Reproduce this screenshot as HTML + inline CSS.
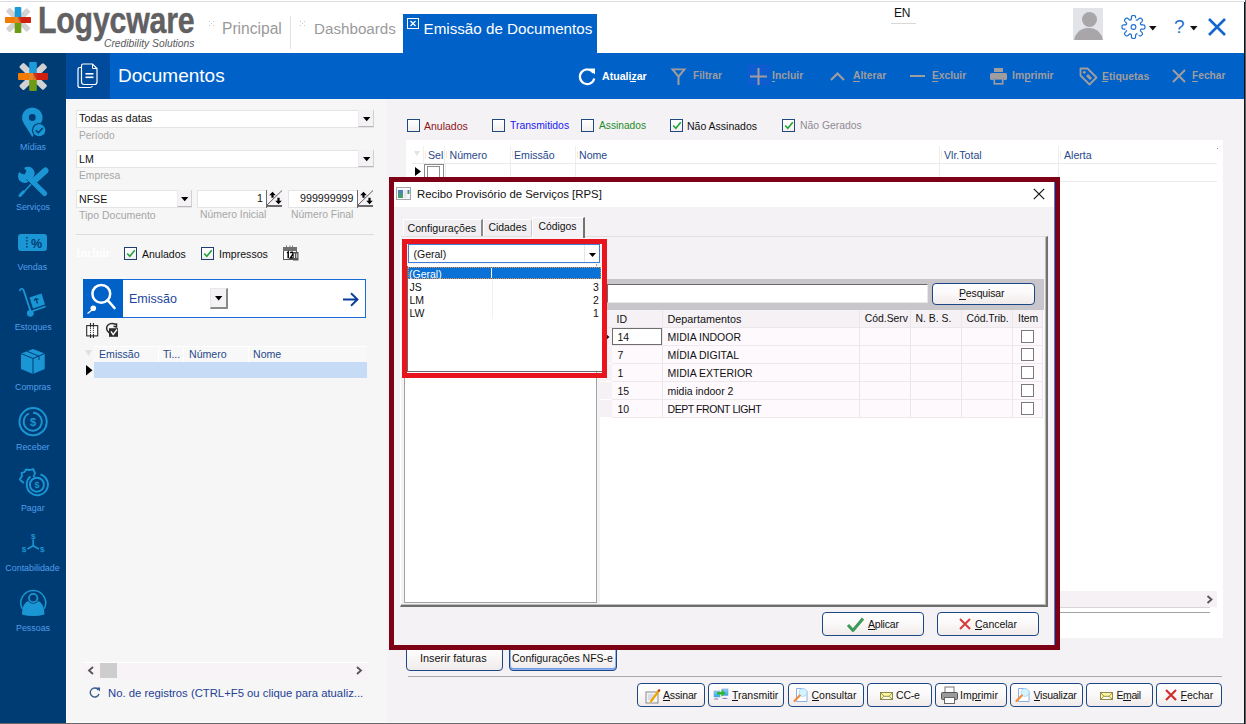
<!DOCTYPE html>
<html><head><meta charset="utf-8">
<style>
*{box-sizing:border-box;margin:0;padding:0}
html,body{width:1246px;height:724px;overflow:hidden;background:#fff;font-family:"Liberation Sans",sans-serif;}
.a{position:absolute}
.t{position:absolute;white-space:nowrap;line-height:1}
svg{position:absolute;overflow:visible}
</style></head><body>
<div id="root" class="a" style="left:0;top:0;width:1246px;height:724px;">

<!-- ===== HEADER ===== -->
<div class="a" style="left:0;top:1px;width:1244px;height:1px;background:#dcdce3"></div>
<div class="a" style="left:1245px;top:0;width:1px;height:724px;background:#5c6068"></div>
<div class="a" style="left:1244px;top:2px;width:1px;height:722px;background:#111"></div>

<!-- logo -->
<svg style="left:5px;top:7px" width="26" height="26" viewBox="0 0 30 30">
  <g id="logo">
  <rect x="12" y="-2" width="6.5" height="34" rx="1.5" fill="#d2d2d4" transform="rotate(45 15 15)"/>
  <rect x="12" y="-2" width="6.5" height="34" rx="1.5" fill="#d2d2d4" transform="rotate(-45 15 15)"/>
  <rect x="11.2" y="0" width="7.6" height="15" rx="1" fill="#1d9ad8"/>
  <rect x="11.2" y="15" width="7.6" height="15" rx="1" fill="#6c9c14"/>
  <rect x="0" y="11.5" width="15" height="7" rx="1" fill="#f27b06"/>
  <rect x="15" y="11.5" width="15" height="7" rx="1" fill="#d2200f"/>
  <path d="M11.2 11.5 L15 11.5 L18.8 18.5 L11.2 18.5Z" fill="#e48a2a" opacity="0.8"/>
  <path d="M15 11.5 L18.8 11.5 L18.8 18.5Z" fill="#c53b2a" opacity="0.9"/>
  </g>
</svg>
<div class="t" style="left:38px;top:2.5px;font-size:30px;font-weight:700;color:#616063;transform-origin:0 0;transform:scale(1.01,1.2);letter-spacing:-0.2px;-webkit-text-stroke:0.35px #616063">Logycware</div>
<div class="t" style="left:104px;top:38.5px;font-size:10.3px;font-style:italic;color:#59585c">Credibility Solutions</div>

<!-- tabs -->
<svg style="left:209px;top:21px" width="6" height="5"><g fill="#c8c8c8"><rect x="0" y="0" width="1" height="1"/><rect x="4" y="0" width="1" height="1"/><rect x="2" y="2" width="1" height="1"/><rect x="0" y="4" width="1" height="1"/><rect x="4" y="4" width="1" height="1"/></g></svg>
<div class="t" style="left:222px;top:21px;font-size:15.6px;color:#9a9a9a">Principal</div>
<div class="a" style="left:290px;top:16px;width:1px;height:33px;background:#e2e2e2"></div>
<svg style="left:300px;top:21px" width="6" height="5"><g fill="#c8c8c8"><rect x="0" y="0" width="1" height="1"/><rect x="4" y="0" width="1" height="1"/><rect x="2" y="2" width="1" height="1"/><rect x="0" y="4" width="1" height="1"/><rect x="4" y="4" width="1" height="1"/></g></svg>
<div class="t" style="left:314px;top:21px;font-size:15.2px;color:#9a9a9a">Dashboards</div>

<div class="a" style="left:403px;top:14px;width:194px;height:40px;background:#0061c9"></div>
<svg style="left:407px;top:18px" width="12" height="11"><rect x="0.5" y="0.5" width="11" height="10" fill="none" stroke="#fff" stroke-width="1"/><path d="M3.5 3 L8.5 8 M8.5 3 L3.5 8" stroke="#fff" stroke-width="1.3"/></svg>
<div class="t" style="left:423.5px;top:21px;font-size:15.2px;color:#fff">Emissão de Documentos</div>

<div class="t" style="left:894px;top:7px;font-size:12px;color:#111;letter-spacing:-0.3px">EN</div>
<div class="a" style="left:891px;top:23px;width:25px;height:1px;background:#d8d8d8"></div>

<div class="a" style="left:1073px;top:8px;width:30px;height:32px;background:#e3e3ea;overflow:hidden">
  <div class="a" style="left:9px;top:4px;width:15px;height:15px;border-radius:50%;background:#a8a6a9"></div>
  <div class="a" style="left:1px;top:20px;width:29px;height:24px;border-radius:14px 14px 0 0;background:#a8a6a9"></div>
</div>
<svg style="left:1121px;top:15px" width="25" height="24" viewBox="0 0 25 24"><path fill="none" stroke="#1e6ecf" stroke-width="1.2" stroke-dasharray="16 1.5 26 1.5 34 1.5 200" d="M24.00 12.00 L24.00 12.15 L23.99 12.30 L23.99 12.45 L23.97 12.60 L23.96 12.75 L23.94 12.90 L23.91 13.05 L23.87 13.20 L23.82 13.34 L23.75 13.48 L23.64 13.62 L23.49 13.74 L23.29 13.85 L23.00 13.95 L22.64 14.02 L22.20 14.06 L21.73 14.09 L21.28 14.11 L20.88 14.13 L20.55 14.16 L20.30 14.20 L20.11 14.25 L19.97 14.32 L19.86 14.39 L19.78 14.47 L19.71 14.55 L19.66 14.64 L19.61 14.73 L19.56 14.82 L19.52 14.91 L19.49 15.00 L19.45 15.10 L19.43 15.19 L19.41 15.29 L19.40 15.40 L19.40 15.52 L19.42 15.64 L19.48 15.79 L19.57 15.96 L19.72 16.17 L19.93 16.42 L20.20 16.72 L20.51 17.05 L20.82 17.40 L21.09 17.74 L21.30 18.05 L21.44 18.32 L21.51 18.54 L21.52 18.74 L21.50 18.91 L21.45 19.06 L21.39 19.20 L21.31 19.33 L21.22 19.45 L21.13 19.57 L21.04 19.69 L20.94 19.80 L20.84 19.91 L20.74 20.02 L20.63 20.13 L20.52 20.24 L20.41 20.34 L20.30 20.44 L20.19 20.54 L20.07 20.63 L19.95 20.72 L19.83 20.81 L19.70 20.89 L19.56 20.95 L19.41 21.00 L19.24 21.02 L19.04 21.01 L18.82 20.94 L18.55 20.80 L18.24 20.59 L17.90 20.32 L17.55 20.01 L17.22 19.70 L16.92 19.43 L16.67 19.22 L16.46 19.07 L16.29 18.98 L16.14 18.92 L16.02 18.90 L15.90 18.90 L15.79 18.91 L15.69 18.93 L15.60 18.95 L15.50 18.99 L15.41 19.02 L15.32 19.06 L15.23 19.11 L15.14 19.16 L15.05 19.21 L14.97 19.28 L14.89 19.36 L14.82 19.47 L14.75 19.61 L14.70 19.80 L14.66 20.05 L14.63 20.38 L14.61 20.78 L14.59 21.23 L14.56 21.70 L14.52 22.14 L14.45 22.50 L14.35 22.79 L14.24 22.99 L14.12 23.14 L13.98 23.25 L13.84 23.32 L13.70 23.37 L13.55 23.41 L13.40 23.44 L13.25 23.46 L13.10 23.47 L12.95 23.49 L12.80 23.49 L12.65 23.50 L12.50 23.50 L12.35 23.50 L12.20 23.49 L12.05 23.49 L11.90 23.47 L11.75 23.46 L11.60 23.44 L11.45 23.41 L11.30 23.37 L11.16 23.32 L11.02 23.25 L10.88 23.14 L10.76 22.99 L10.65 22.79 L10.55 22.50 L10.48 22.14 L10.44 21.70 L10.41 21.23 L10.39 20.78 L10.37 20.38 L10.34 20.05 L10.30 19.80 L10.25 19.61 L10.18 19.47 L10.11 19.36 L10.03 19.28 L9.95 19.21 L9.86 19.16 L9.77 19.11 L9.68 19.06 L9.59 19.02 L9.50 18.99 L9.40 18.95 L9.31 18.93 L9.21 18.91 L9.10 18.90 L8.98 18.90 L8.86 18.92 L8.71 18.98 L8.54 19.07 L8.33 19.22 L8.08 19.43 L7.78 19.70 L7.45 20.01 L7.10 20.32 L6.76 20.59 L6.45 20.80 L6.18 20.94 L5.96 21.01 L5.76 21.02 L5.59 21.00 L5.44 20.95 L5.30 20.89 L5.17 20.81 L5.05 20.72 L4.93 20.63 L4.81 20.54 L4.70 20.44 L4.59 20.34 L4.48 20.24 L4.37 20.13 L4.26 20.02 L4.16 19.91 L4.06 19.80 L3.96 19.69 L3.87 19.57 L3.78 19.45 L3.69 19.33 L3.61 19.20 L3.55 19.06 L3.50 18.91 L3.48 18.74 L3.49 18.54 L3.56 18.32 L3.70 18.05 L3.91 17.74 L4.18 17.40 L4.49 17.05 L4.80 16.72 L5.07 16.42 L5.28 16.17 L5.43 15.96 L5.52 15.79 L5.58 15.64 L5.60 15.52 L5.60 15.40 L5.59 15.29 L5.57 15.19 L5.55 15.10 L5.51 15.00 L5.48 14.91 L5.44 14.82 L5.39 14.73 L5.34 14.64 L5.29 14.55 L5.22 14.47 L5.14 14.39 L5.03 14.32 L4.89 14.25 L4.70 14.20 L4.45 14.16 L4.12 14.13 L3.72 14.11 L3.27 14.09 L2.80 14.06 L2.36 14.02 L2.00 13.95 L1.71 13.85 L1.51 13.74 L1.36 13.62 L1.25 13.48 L1.18 13.34 L1.13 13.20 L1.09 13.05 L1.06 12.90 L1.04 12.75 L1.03 12.60 L1.01 12.45 L1.01 12.30 L1.00 12.15 L1.00 12.00 L1.00 11.85 L1.01 11.70 L1.01 11.55 L1.03 11.40 L1.04 11.25 L1.06 11.10 L1.09 10.95 L1.13 10.80 L1.18 10.66 L1.25 10.52 L1.36 10.38 L1.51 10.26 L1.71 10.15 L2.00 10.05 L2.36 9.98 L2.80 9.94 L3.27 9.91 L3.72 9.89 L4.12 9.87 L4.45 9.84 L4.70 9.80 L4.89 9.75 L5.03 9.68 L5.14 9.61 L5.22 9.53 L5.29 9.45 L5.34 9.36 L5.39 9.27 L5.44 9.18 L5.48 9.09 L5.51 9.00 L5.55 8.90 L5.57 8.81 L5.59 8.71 L5.60 8.60 L5.60 8.48 L5.58 8.36 L5.52 8.21 L5.43 8.04 L5.28 7.83 L5.07 7.58 L4.80 7.28 L4.49 6.95 L4.18 6.60 L3.91 6.26 L3.70 5.95 L3.56 5.68 L3.49 5.46 L3.48 5.26 L3.50 5.09 L3.55 4.94 L3.61 4.80 L3.69 4.67 L3.78 4.55 L3.87 4.43 L3.96 4.31 L4.06 4.20 L4.16 4.09 L4.26 3.98 L4.37 3.87 L4.48 3.76 L4.59 3.66 L4.70 3.56 L4.81 3.46 L4.93 3.37 L5.05 3.28 L5.17 3.19 L5.30 3.11 L5.44 3.05 L5.59 3.00 L5.76 2.98 L5.96 2.99 L6.18 3.06 L6.45 3.20 L6.76 3.41 L7.10 3.68 L7.45 3.99 L7.78 4.30 L8.08 4.57 L8.33 4.78 L8.54 4.93 L8.71 5.02 L8.86 5.08 L8.98 5.10 L9.10 5.10 L9.21 5.09 L9.31 5.07 L9.40 5.05 L9.50 5.01 L9.59 4.98 L9.68 4.94 L9.77 4.89 L9.86 4.84 L9.95 4.79 L10.03 4.72 L10.11 4.64 L10.18 4.53 L10.25 4.39 L10.30 4.20 L10.34 3.95 L10.37 3.62 L10.39 3.22 L10.41 2.77 L10.44 2.30 L10.48 1.86 L10.55 1.50 L10.65 1.21 L10.76 1.01 L10.88 0.86 L11.02 0.75 L11.16 0.68 L11.30 0.63 L11.45 0.59 L11.60 0.56 L11.75 0.54 L11.90 0.53 L12.05 0.51 L12.20 0.51 L12.35 0.50 L12.50 0.50 L12.65 0.50 L12.80 0.51 L12.95 0.51 L13.10 0.53 L13.25 0.54 L13.40 0.56 L13.55 0.59 L13.70 0.63 L13.84 0.68 L13.98 0.75 L14.12 0.86 L14.24 1.01 L14.35 1.21 L14.45 1.50 L14.52 1.86 L14.56 2.30 L14.59 2.77 L14.61 3.22 L14.63 3.62 L14.66 3.95 L14.70 4.20 L14.75 4.39 L14.82 4.53 L14.89 4.64 L14.97 4.72 L15.05 4.79 L15.14 4.84 L15.23 4.89 L15.32 4.94 L15.41 4.98 L15.50 5.01 L15.60 5.05 L15.69 5.07 L15.79 5.09 L15.90 5.10 L16.02 5.10 L16.14 5.08 L16.29 5.02 L16.46 4.93 L16.67 4.78 L16.92 4.57 L17.22 4.30 L17.55 3.99 L17.90 3.68 L18.24 3.41 L18.55 3.20 L18.82 3.06 L19.04 2.99 L19.24 2.98 L19.41 3.00 L19.56 3.05 L19.70 3.11 L19.83 3.19 L19.95 3.28 L20.07 3.37 L20.19 3.46 L20.30 3.56 L20.41 3.66 L20.52 3.76 L20.63 3.87 L20.74 3.98 L20.84 4.09 L20.94 4.20 L21.04 4.31 L21.13 4.43 L21.22 4.55 L21.31 4.67 L21.39 4.80 L21.45 4.94 L21.50 5.09 L21.52 5.26 L21.51 5.46 L21.44 5.68 L21.30 5.95 L21.09 6.26 L20.82 6.60 L20.51 6.95 L20.20 7.28 L19.93 7.58 L19.72 7.83 L19.57 8.04 L19.48 8.21 L19.42 8.36 L19.40 8.48 L19.40 8.60 L19.41 8.71 L19.43 8.81 L19.45 8.90 L19.49 9.00 L19.52 9.09 L19.56 9.18 L19.61 9.27 L19.66 9.36 L19.71 9.45 L19.78 9.53 L19.86 9.61 L19.97 9.68 L20.11 9.75 L20.30 9.80 L20.55 9.84 L20.88 9.87 L21.28 9.89 L21.73 9.91 L22.20 9.94 L22.64 9.98 L23.00 10.05 L23.29 10.15 L23.49 10.26 L23.64 10.38 L23.75 10.52 L23.82 10.66 L23.87 10.80 L23.91 10.95 L23.94 11.10 L23.96 11.25 L23.97 11.40 L23.99 11.55 L23.99 11.70 L24.00 11.85Z"/><circle cx="12.5" cy="12" r="2.4" fill="none" stroke="#1e6ecf" stroke-width="1.1"/></svg>
<svg style="left:1149px;top:26px" width="8" height="5"><path d="M0 0H7.5L3.75 4.5Z" fill="#111"/></svg>
<div class="t" style="left:1174px;top:17px;font-size:19px;color:#1e6ecf">?</div>
<svg style="left:1190px;top:26px" width="8" height="5"><path d="M0 0H7.5L3.75 4.5Z" fill="#111"/></svg>
<svg style="left:1208px;top:18px" width="18" height="18"><path d="M1 1L17 17M17 1L1 17" stroke="#1366d0" stroke-width="2.6"/></svg>

<!-- ===== BLUE BAR ===== -->
<div class="a" style="left:0;top:53px;width:66px;height:670px;background:#003c74"></div>
<div class="a" style="left:66px;top:53px;width:44px;height:46px;background:#004b9c"></div>
<div class="a" style="left:110px;top:53px;width:1134px;height:46px;background:#0061c9"></div>

<svg style="left:77px;top:63px" width="22" height="26" viewBox="0 0 22 26">
  <path d="M4.5 4.5 H3 Q1 4.5 1 6.5 V22.5 Q1 24.5 3 24.5 H13 Q14.5 24.5 15.5 23" fill="none" stroke="#fff" stroke-width="1.2"/>
  <path d="M6 1 H15.5 L20 5.5 V19 Q20 21.5 17.5 21.5 H7.5 Q4.5 21.5 4.5 19 V3 Q4.5 1 6 1Z" fill="none" stroke="#fff" stroke-width="1.2"/>
  <path d="M15.5 1 V5.5 H20" fill="none" stroke="#fff" stroke-width="1"/>
  <rect x="8.5" y="10" width="8" height="1.6" fill="#fff"/>
  <rect x="8.5" y="13.5" width="8" height="1.6" fill="#fff"/>
</svg>
<div class="t" style="left:118px;top:66px;font-size:19px;color:#fff">Documentos</div>

<!-- toolbar -->
<svg style="left:578px;top:67px" width="19" height="19" viewBox="0 0 19 19"><path d="M15.5 6 A7.3 7.3 0 1 0 16.3 11.5" fill="none" stroke="#fff" stroke-width="2.2"/><path d="M11 1.5 L17 1.5 L17 7.5Z" fill="#fff"/></svg>
<div class="t" style="left:602px;top:71px;font-size:10.6px;font-weight:700;color:#fff">Atualizar</div>
<div class="a" style="left:630px;top:81px;width:6px;height:1px;background:#fff"></div>

<svg style="left:670px;top:68px" width="17" height="17" viewBox="0 0 17 17"><path d="M0.5 0.5 H16.5 L9.5 9 V17 H7.5 V9Z" fill="#9f9d9e"/><path d="M4.5 2.3 H12.5 L8.5 7Z" fill="#0061c9"/></svg>
<div class="t" style="left:693px;top:71px;font-size:10.2px;font-weight:700;color:#9f9d9e">Filtrar</div>

<div class="a" style="left:748px;top:65px;width:22px;height:21px;background-image:linear-gradient(#1f55d8 1px,transparent 1px),linear-gradient(90deg,#1f55d8 1px,transparent 1px);background-size:3px 3px;opacity:0.8"></div>
<svg style="left:750px;top:68px" width="17" height="17"><path d="M8.5 0V17M0 8.5H17" stroke="#9f9d9e" stroke-width="2"/></svg>
<div class="t" style="left:772px;top:71px;font-size:10.4px;font-weight:700;color:#9f9d9e">Incluir</div>
<div class="a" style="left:772px;top:81px;width:3px;height:1px;background:#9f9d9e"></div>

<svg style="left:830px;top:72px" width="15" height="9"><path d="M1 8L7.5 1.5L14 8" fill="none" stroke="#9f9d9e" stroke-width="2.2"/></svg>
<div class="t" style="left:853px;top:71px;font-size:10.3px;font-weight:700;color:#9f9d9e">Alterar</div>
<div class="a" style="left:853px;top:81px;width:7px;height:1px;background:#9f9d9e"></div>

<div class="a" style="left:910px;top:75px;width:15px;height:2px;background:#9f9d9e"></div>
<div class="t" style="left:932px;top:71px;font-size:10.4px;letter-spacing:-0.08px;font-weight:700;color:#9f9d9e">Excluir</div>
<div class="a" style="left:932px;top:81px;width:6px;height:1px;background:#9f9d9e"></div>

<svg style="left:990px;top:68px" width="17" height="17" viewBox="0 0 17 17"><rect x="4" y="0" width="9" height="4" fill="#9f9d9e"/><rect x="0" y="5" width="17" height="7" rx="1.5" fill="#9f9d9e"/><rect x="3.5" y="10" width="10" height="6.5" fill="#0061c9"/><rect x="4.3" y="10.8" width="8.4" height="5" fill="none" stroke="#9f9d9e" stroke-width="1.6"/></svg>
<div class="t" style="left:1012px;top:71px;font-size:10.4px;font-weight:700;color:#9f9d9e">Imprimir</div>
<div class="a" style="left:1025px;top:81px;width:6px;height:1px;background:#9f9d9e"></div>

<svg style="left:1079px;top:67px" width="19" height="19" viewBox="0 0 19 19"><path d="M1.5 1.5 H8.5 L17.5 10.5 L10.5 17.5 L1.5 8.5Z" fill="none" stroke="#9f9d9e" stroke-width="1.8" stroke-linejoin="round"/><circle cx="5.3" cy="5.3" r="1.4" fill="#9f9d9e"/><path d="M8 8 L12 12" stroke="#9f9d9e" stroke-width="3"/></svg>
<div class="t" style="left:1102px;top:71px;font-size:10.5px;font-weight:700;color:#9f9d9e">Etiquetas</div>
<div class="a" style="left:1102px;top:81px;width:6px;height:1px;background:#9f9d9e"></div>

<svg style="left:1172px;top:69px" width="14" height="14"><path d="M1 1L13 13M13 1L1 13" stroke="#9f9d9e" stroke-width="2"/></svg>
<div class="t" style="left:1192px;top:71px;font-size:10.2px;font-weight:700;color:#9f9d9e">Fechar</div>
<div class="a" style="left:1192px;top:81px;width:6px;height:1px;background:#9f9d9e"></div>

<!-- ===== SIDEBAR ===== -->
<div class="a" style="left:66px;top:99px;width:1px;height:624px;background:#fff"></div>
<svg style="left:0;top:0" width="66" height="724" viewBox="0 0 66 724">
  <svg x="18" y="62" width="30" height="29" viewBox="0 0 30 30" preserveAspectRatio="none"><use href="#logo"/></svg>
  <g fill="#1a96d4" stroke="none">
    <!-- pin -->
    <path d="M32.3 137 L23.8 123.5 A10.3 10.3 0 1 1 40.8 123.5 Z"/>
    <circle cx="32.3" cy="117.5" r="3.4" fill="#003c74"/>
    <circle cx="39.2" cy="130.2" r="7.3" fill="#003c74"/>
    <circle cx="39.2" cy="130.2" r="6.1"/>
    <path d="M35.8 130.2 L38.3 132.7 L42.8 128" fill="none" stroke="#003c74" stroke-width="1.6"/>
    <!-- tools -->
    <path d="M45.4 170.6 L33.3 181.6" stroke="#1a96d4" stroke-width="6.2" stroke-linecap="round"/>
    <path d="M33 182 L21.8 194.3" stroke="#1a96d4" stroke-width="1.6"/>
    <path d="M20 195.5 L23.5 191.8" stroke="#1a96d4" stroke-width="3" stroke-linecap="round"/>
    <path d="M29.5 178.5 L44.6 193.5" stroke="#1a96d4" stroke-width="5.2" stroke-linecap="round"/>
    <path d="M19.3 172 A6.5 6.5 0 0 0 30.2 180.3 L32 178.5 A6.5 6.5 0 0 0 24 168 L26.5 171 L24.5 174.5 L21.5 173.8 Z"/>
    <path d="M26 179 L36 189" stroke="#003c74" stroke-width="1" opacity="0.6"/>
    <!-- vendas -->
    <rect x="18" y="234" width="29" height="17" rx="3"/>
    <g fill="#003c74"><rect x="26.2" y="237" width="1.4" height="1.6"/><rect x="26.2" y="240" width="1.4" height="1.6"/><rect x="26.2" y="243" width="1.4" height="1.6"/><rect x="26.2" y="246" width="1.4" height="1.6"/></g>
    <text x="31" y="247.5" font-family="Liberation Sans" font-weight="700" font-size="12.5" fill="#003c74">%</text>
    <!-- estoques -->
    <path d="M19.5 291 Q21 287 23.5 290 L30.5 311" fill="none" stroke="#1a96d4" stroke-width="1.8"/>
    <circle cx="30.3" cy="313.3" r="3.4"/>
    <path d="M32.5 311 L45.5 306.5" stroke="#1a96d4" stroke-width="1.8"/>
    <path d="M29.5 297.5 L41.5 293.5 L45 304.5 L33 308.5Z"/>
    <path d="M37.5 303.5 L36 299 M34 300.5 L36 298.5 L38.6 299.5" fill="none" stroke="#003c74" stroke-width="1.3"/>
    <!-- compras -->
    <path d="M33 349 L44.7 353.5 L44.7 369 L33 374 L21 369 L21 353.5Z"/>
    <path d="M21 353.5 L33 358.5 L44.7 353.5 M33 358.5 L33 374 M27 351.2 L39 356.3 L39 360" fill="none" stroke="#003c74" stroke-width="1"/>
    <!-- receber -->
    <circle cx="33.1" cy="421.7" r="13.6" fill="none" stroke="#1a96d4" stroke-width="2"/>
    <path d="M29 413.5 A9 9 0 1 0 33.1 412.7" fill="none" stroke="#1a96d4" stroke-width="1.9"/>
    <text x="33.1" y="426" font-family="Liberation Sans" font-weight="700" font-size="11" text-anchor="middle">$</text>
    <!-- pagar -->
    <path d="M19.5 480 L22 476 L21.5 473 L24.5 472 L26 469.5 L30 470 L33 469 L35 473 L33.5 477" fill="none" stroke="#1a96d4" stroke-width="1.8" stroke-linejoin="round"/>
    <path d="M20 480 L24 483" stroke="#1a96d4" stroke-width="1.8"/>
    <path d="M30.5 476.5 A10.6 10.6 0 1 0 40.5 474.5" fill="none" stroke="#1a96d4" stroke-width="1.9"/>
    <circle cx="36.9" cy="484.7" r="7" fill="none" stroke="#1a96d4" stroke-width="1.9"/>
    <text x="36.9" y="488.3" font-family="Liberation Sans" font-weight="700" font-size="9" text-anchor="middle">$</text>
    <!-- contabilidade -->
    <text x="33.2" y="538.5" font-family="Liberation Sans" font-weight="700" font-size="8" text-anchor="middle">$</text>
    <text x="24" y="552" font-family="Liberation Sans" font-weight="700" font-size="8" text-anchor="middle">$</text>
    <text x="42.3" y="552" font-family="Liberation Sans" font-weight="700" font-size="8" text-anchor="middle">$</text>
    <path d="M33.2 539.5 V545.7 L27.5 549 M33.2 545.7 L38.8 549" fill="none" stroke="#1a96d4" stroke-width="1.6"/>
    <!-- pessoas -->
    <path d="M22.5 609 A12.4 12.4 0 1 1 44 609" fill="none" stroke="#1a96d4" stroke-width="1.5"/>
    <path d="M22 614.5 Q22 600 33.2 600 Q44.4 600 44.4 614.5 Q39 616 33.2 616 Q27 616 22 614.5Z"/>
    <circle cx="33.2" cy="598" r="5.8" fill="#003c74"/>
    <circle cx="33.2" cy="598" r="4.2" fill="none" stroke="#1a96d4" stroke-width="1.7"/>
  </g>
  <g font-family="Liberation Sans" font-size="8.9" fill="#509cea" text-anchor="middle">
    <text x="33" y="150">Mídias</text>
    <text x="33" y="210">Serviços</text>
    <text x="32.3" y="270">Vendas</text>
    <text x="33.2" y="330">Estoques</text>
    <text x="33" y="390">Compras</text>
    <text x="32.8" y="450">Receber</text>
    <text x="32.8" y="510.5">Pagar</text>
    <text x="32.5" y="570.5">Contabilidade</text>
    <text x="33" y="630.5">Pessoas</text>
  </g>
</svg>

<!-- SIDEBAR_PLACEHOLDER -->
<!-- ===== LEFT PANEL ===== -->
<div class="a" style="left:67px;top:99px;width:320px;height:623px;background:#f6f6f6"></div>
<div class="a" style="left:67px;top:722px;width:1177px;height:1px;background:#fbfbfb"></div>
<div class="a" style="left:0;top:723px;width:1244px;height:1px;background:#66666a"></div>

<!-- field 1 -->
<div class="a" style="left:76px;top:110px;width:298px;height:18px;background:#fff;border:1px solid #e4e4e4"></div>
<div class="a" style="left:358px;top:110px;width:16px;height:17px;background:#f5f2f5;border-left:1px solid #ececec;border-bottom:1px solid #b8b8b8;border-right:1px solid #d0d0d0"></div>
<svg style="left:363px;top:117px" width="8" height="5"><path d="M0 0H7.4L3.7 4.3Z" fill="#000"/></svg>
<div class="t" style="left:79px;top:113px;font-size:10.9px;color:#111">Todas as datas</div>
<div class="t" style="left:79px;top:131px;font-size:10.2px;color:#a6a6a6">Período</div>

<!-- field 2 -->
<div class="a" style="left:76px;top:150px;width:298px;height:18px;background:#fff;border:1px solid #e4e4e4"></div>
<div class="a" style="left:358px;top:150px;width:16px;height:17px;background:#f5f2f5;border-left:1px solid #ececec;border-bottom:1px solid #b8b8b8;border-right:1px solid #d0d0d0"></div>
<svg style="left:363px;top:157px" width="8" height="5"><path d="M0 0H7.4L3.7 4.3Z" fill="#000"/></svg>
<div class="t" style="left:79px;top:154px;font-size:10.6px;color:#111">LM</div>
<div class="t" style="left:79px;top:171px;font-size:10.3px;color:#a6a6a6">Empresa</div>

<!-- row 3 -->
<div class="a" style="left:76px;top:190px;width:116px;height:18px;background:#fff;border:1px solid #e4e4e4"></div>
<div class="a" style="left:177px;top:190px;width:15px;height:17px;background:#f5f2f5;border-left:1px solid #ececec;border-bottom:1px solid #b8b8b8;border-right:1px solid #d0d0d0"></div>
<svg style="left:181px;top:197px" width="8" height="5"><path d="M0 0H7.4L3.7 4.3Z" fill="#000"/></svg>
<div class="t" style="left:79px;top:194px;font-size:10.6px;color:#111">NFSE</div>

<div class="a" style="left:197px;top:190px;width:86px;height:18px;background:#fff;border:1px solid #e4e4e4"></div>
<svg style="left:266px;top:190px" width="17" height="18" viewBox="0 0 17 18"><rect x="0" y="0" width="17" height="18" fill="#f6f3f6"/><path d="M0.5 0 V18" stroke="#6a6a6a" stroke-width="1"/><path d="M0 16 H16" stroke="#6a6a6a" stroke-width="2"/><path d="M1 15 L16 0.5" stroke="#5a5a5a" stroke-width="1"/><path d="M6.5 1.8 L9.8 5.2 L7.6 5.2 L7.6 7.8 L5.4 7.8 L5.4 5.2 L3.2 5.2Z" fill="#000"/><path d="M11.4 7.8 L13.6 7.8 L13.6 10.8 L15.8 10.8 L12.5 14.3 L9.2 10.8 L11.4 10.8Z" fill="#000"/></svg>
<div class="t" style="left:257px;top:193px;font-size:10.7px;color:#111">1</div>

<div class="a" style="left:288px;top:190px;width:86px;height:18px;background:#fff;border:1px solid #e4e4e4"></div>
<svg style="left:357px;top:190px" width="17" height="18" viewBox="0 0 17 18"><rect x="0" y="0" width="17" height="18" fill="#f6f3f6"/><path d="M0.5 0 V18" stroke="#6a6a6a" stroke-width="1"/><path d="M0 16 H16" stroke="#6a6a6a" stroke-width="2"/><path d="M1 15 L16 0.5" stroke="#5a5a5a" stroke-width="1"/><path d="M6.5 1.8 L9.8 5.2 L7.6 5.2 L7.6 7.8 L5.4 7.8 L5.4 5.2 L3.2 5.2Z" fill="#000"/><path d="M11.4 7.8 L13.6 7.8 L13.6 10.8 L15.8 10.8 L12.5 14.3 L9.2 10.8 L11.4 10.8Z" fill="#000"/></svg>
<div class="t" style="left:300px;top:193px;font-size:10.7px;color:#111">999999999</div>

<div class="t" style="left:79px;top:210px;font-size:10.5px;color:#a6a6a6">Tipo Documento</div>
<div class="t" style="left:200px;top:210px;font-size:10.4px;color:#a6a6a6">Número Inicial</div>
<div class="t" style="left:291px;top:210px;font-size:10.4px;color:#a6a6a6">Número Final</div>

<div class="a" style="left:76px;top:234px;width:298px;height:1px;background:#dcdcdc"></div>

<div class="t" style="left:76px;top:248px;font-family:'Liberation Serif',serif;font-size:11.8px;font-weight:700;color:#fff">Incluir</div>
<div class="a" style="left:124px;top:247px;width:13px;height:13px;border:1px solid #1f3f70;background:linear-gradient(#fff,#f2eef0)"></div>
<svg style="left:126px;top:249px" width="10" height="9"><path d="M1.2 4.5 L3.8 7.3 L8.8 1.2" fill="none" stroke="#21a33b" stroke-width="1.6"/></svg>
<div class="t" style="left:142px;top:249px;font-size:10.5px;color:#111">Anulados</div>
<div class="a" style="left:201px;top:247px;width:13px;height:13px;border:1px solid #1f3f70;background:linear-gradient(#fff,#f2eef0)"></div>
<svg style="left:203px;top:249px" width="10" height="9"><path d="M1.2 4.5 L3.8 7.3 L8.8 1.2" fill="none" stroke="#21a33b" stroke-width="1.6"/></svg>
<div class="t" style="left:219px;top:249px;font-size:10.6px;color:#111">Impressos</div>
<svg style="left:282px;top:244px" width="18" height="18" viewBox="0 0 18 18"><rect x="1.5" y="3.5" width="13" height="12" fill="#fff" stroke="#555" stroke-width="1"/><rect x="1" y="3" width="14" height="4" fill="#707070"/><path d="M4.5 1.5V3 M8 1.5V3 M10.5 1.5V3" stroke="#777" stroke-width="1"/><path d="M5 9 L6.2 8 V14.2 M8.3 9 Q9.2 7.8 10.5 8.3 Q11.5 9.2 10.5 11 L8.3 14 H11.5" fill="none" stroke="#000" stroke-width="1.5"/><rect x="11" y="8" width="5.5" height="8.5" fill="#555"/><path d="M12.5 9.5V14 M14.8 9.5V14" stroke="#fff" stroke-width="0.9"/></svg>

<!-- search box -->
<div class="a" style="left:83px;top:279px;width:283px;height:39px;background:#fff;border:1px solid #1a6cd6"></div>
<div class="a" style="left:83px;top:279px;width:40px;height:39px;background:#0061c9"></div>
<svg style="left:83px;top:279px" width="40" height="39" viewBox="0 0 40 39"><circle cx="18.3" cy="14.8" r="8.9" fill="none" stroke="#fff" stroke-width="2.5"/><path d="M24.8 21.3 L31.5 29" stroke="#fff" stroke-width="2.6" stroke-linecap="round"/><circle cx="10.3" cy="29.3" r="2.8" fill="#fff"/><path d="M9 31 L4.5 34.5" stroke="#fff" stroke-width="1.3"/></svg>
<div class="t" style="left:129px;top:293px;font-size:12.5px;color:#23479a">Emissão</div>
<div class="a" style="left:210px;top:288px;width:18px;height:21px;background:#f5f2f5;border-top:1px solid #e8e8e8;border-left:1px solid #e8e8e8;border-right:2px solid #8a8a8a;border-bottom:2px solid #8a8a8a"></div>
<svg style="left:215px;top:296px" width="8" height="5"><path d="M0 0H7.4L3.7 4.5Z" fill="#000"/></svg>
<svg style="left:342px;top:292px" width="17" height="15" viewBox="0 0 17 15"><path d="M1 7.5 H15.5 M9 1.2 L15.5 7.5 L9 13.8" fill="none" stroke="#0d3d9c" stroke-width="1.9"/></svg>

<svg style="left:85px;top:322px" width="14" height="17" viewBox="0 0 14 17"><rect x="1.7" y="3.6" width="11" height="10.3" fill="#fff" stroke="#2a2a2a" stroke-width="1.1"/><path d="M5.5 1V5.5 M8.4 1V5.5 M5.5 12V16 M8.4 12V16" stroke="#2a2a2a" stroke-width="1.1"/><g fill="#2a2a2a"><circle cx="5.5" cy="6.6" r="0.6"/><circle cx="8.4" cy="6.6" r="0.6"/><circle cx="5.5" cy="8.6" r="0.6"/><circle cx="8.4" cy="8.6" r="0.6"/><circle cx="5.5" cy="10.6" r="0.6"/><circle cx="8.4" cy="10.6" r="0.6"/></g></svg>
<svg style="left:105px;top:322px" width="14" height="16" viewBox="0 0 14 16"><path d="M11 2.5 Q6 0.5 3 3 Q0.5 5.5 2.5 9 L4.5 11" fill="none" stroke="#2e2e2e" stroke-width="1.5"/><path d="M8.5 4.3 L11.5 5 L11.5 1.2" fill="none" stroke="#2e2e2e" stroke-width="1.5"/><rect x="4" y="6.2" width="9" height="8.6" fill="#2e2e2e"/><path d="M6 9.3 L8.2 12.6 L12 7.5" fill="none" stroke="#fff" stroke-width="1.4"/></svg>

<!-- small grid -->
<svg style="left:85px;top:350px" width="8" height="7"><path d="M0 0H7L3.5 6Z" fill="#e0e0e0"/></svg>
<div class="a" style="left:94px;top:346px;width:273px;height:16px;background:#f8f8f8;border-top:1px solid #fff"></div>
<div class="a" style="left:158px;top:346px;width:1px;height:16px;background:#fff"></div>
<div class="a" style="left:183px;top:346px;width:1px;height:16px;background:#fff"></div>
<div class="a" style="left:248px;top:346px;width:1px;height:16px;background:#fff"></div>
<div class="t" style="left:99px;top:349px;font-size:10.6px;color:#27498a">Emissão</div>
<div class="t" style="left:163px;top:349px;font-size:10.6px;color:#27498a">Ti...</div>
<div class="t" style="left:189px;top:349px;font-size:10.6px;color:#27498a">Número</div>
<div class="t" style="left:253px;top:349px;font-size:10.6px;color:#27498a">Nome</div>
<div class="a" style="left:94px;top:362px;width:273px;height:16px;background:#c6dbf5"></div>
<svg style="left:86px;top:365px" width="7" height="11"><path d="M0 0L6.5 5.25L0 10.5Z" fill="#000"/></svg>

<!-- scrollbar -->
<div class="a" style="left:83px;top:662px;width:284px;height:17px;background:#f7f3f7;border-top:1px solid #fff"></div>
<div class="a" style="left:100px;top:663px;width:17px;height:15px;background:#cdcdcd"></div>
<svg style="left:87px;top:666px" width="8" height="9"><path d="M6 1L2 4.5L6 8" fill="none" stroke="#555" stroke-width="1.8"/></svg>
<svg style="left:355px;top:666px" width="8" height="9"><path d="M2 1L6 4.5L2 8" fill="none" stroke="#555" stroke-width="1.8"/></svg>
<svg style="left:89px;top:687px" width="12" height="11" viewBox="0 0 12 11"><path d="M9.5 3 A4.5 4.5 0 1 0 10 7" fill="none" stroke="#3a5a92" stroke-width="1.4"/><path d="M7 0.5 L11 0.5 L11 4.5Z" fill="#3a5a92"/></svg>
<div class="t" style="left:108px;top:688px;font-size:11.3px;color:#243f94">No. de registros (CTRL+F5 ou clique para atualiz...</div>

<!-- LEFTPANEL_PLACEHOLDER -->
<!-- ===== RIGHT PANEL ===== -->
<div class="a" style="left:387px;top:99px;width:857px;height:623px;background:#f5f2f5"></div>
<div class="a" style="left:407px;top:119px;width:13px;height:13px;border:1px solid #1f4a80;background:linear-gradient(#fff,#f4eeee)"></div>
<div class="t" style="left:424px;top:121px;font-size:10.5px;color:#8e1520">Anulados</div>
<div class="a" style="left:492px;top:119px;width:13px;height:13px;border:1px solid #1f4a80;background:linear-gradient(#fff,#f4eeee)"></div>
<div class="t" style="left:510px;top:121px;font-size:10.4px;color:#1818f4">Transmitidos</div>
<div class="a" style="left:581px;top:119px;width:13px;height:13px;border:1px solid #1f4a80;background:linear-gradient(#fff,#f4eeee)"></div>
<div class="t" style="left:599px;top:121px;font-size:10.2px;color:#1c8c2a">Assinados</div>
<div class="a" style="left:670px;top:119px;width:13px;height:13px;border:1px solid #1f4a80;background:linear-gradient(#fff,#f4eeee)"></div>
<svg style="left:672px;top:121px" width="10" height="9"><path d="M1.2 4.5 L3.8 7.3 L8.8 1.2" fill="none" stroke="#21a33b" stroke-width="1.6"/></svg>
<div class="t" style="left:687px;top:121px;font-size:10.5px;color:#111">Não Assinados</div>
<div class="a" style="left:782px;top:119px;width:13px;height:13px;border:1px solid #1f4a80;background:linear-gradient(#fff,#f4eeee)"></div>
<svg style="left:784px;top:121px" width="10" height="9"><path d="M1.2 4.5 L3.8 7.3 L8.8 1.2" fill="none" stroke="#21a33b" stroke-width="1.6"/></svg>
<div class="t" style="left:800px;top:121px;font-size:10.4px;color:#8e8c94">Não Gerados</div>
<div class="a" style="left:406px;top:140px;width:817px;height:498px;background:#fff"></div>
<svg style="left:414px;top:151px" width="7" height="6"><path d="M0 0H6L3 5Z" fill="#e2e2e2"/></svg>
<div class="a" style="left:423px;top:146px;width:1px;height:17px;background:#efefef"></div>
<div class="a" style="left:425px;top:151px;width:1px;height:7px;background:#fbe8d4"></div>
<div class="a" style="left:444px;top:146px;width:1px;height:17px;background:#efefef"></div>
<div class="a" style="left:446px;top:151px;width:1px;height:7px;background:#fbe8d4"></div>
<div class="a" style="left:510px;top:146px;width:1px;height:17px;background:#efefef"></div>
<div class="a" style="left:512px;top:151px;width:1px;height:7px;background:#fbe8d4"></div>
<div class="a" style="left:575px;top:146px;width:1px;height:17px;background:#efefef"></div>
<div class="a" style="left:577px;top:151px;width:1px;height:7px;background:#fbe8d4"></div>
<div class="a" style="left:939px;top:146px;width:1px;height:17px;background:#efefef"></div>
<div class="a" style="left:941px;top:151px;width:1px;height:7px;background:#fbe8d4"></div>
<div class="a" style="left:1058px;top:146px;width:1px;height:17px;background:#efefef"></div>
<div class="a" style="left:1060px;top:151px;width:1px;height:7px;background:#fbe8d4"></div>
<div class="a" style="left:445px;top:163px;width:1px;height:18px;background:#ececec"></div>
<div class="a" style="left:510px;top:163px;width:1px;height:18px;background:#ececec"></div>
<div class="a" style="left:575px;top:163px;width:1px;height:18px;background:#ececec"></div>
<div class="a" style="left:939px;top:163px;width:1px;height:18px;background:#ececec"></div>
<div class="a" style="left:1058px;top:163px;width:1px;height:18px;background:#ececec"></div>
<div class="a" style="left:412px;top:163px;width:805px;height:1px;background:#eaeaea"></div>
<div class="a" style="left:408px;top:181px;width:809px;height:1px;background:#eaeaea"></div>
<div class="a" style="left:1217px;top:148px;width:1px;height:1px;background:#888"></div>
<div class="t" style="left:428px;top:150px;font-size:10.6px;color:#27498a">Sel</div>
<div class="t" style="left:449.5px;top:150px;font-size:10.6px;color:#27498a">Número</div>
<div class="t" style="left:514px;top:150px;font-size:10.6px;color:#27498a">Emissão</div>
<div class="t" style="left:579px;top:150px;font-size:10.6px;color:#27498a">Nome</div>
<div class="t" style="left:944px;top:150px;font-size:10.6px;color:#27498a">Vlr.Total</div>
<div class="t" style="left:1064px;top:150px;font-size:10.6px;color:#27498a">Alerta</div>
<svg style="left:415px;top:167px" width="7" height="10"><path d="M0 0L6 4.5L0 9Z" fill="#000"/></svg>
<div class="a" style="left:424px;top:164px;width:20px;height:16px;border:1px solid #8a8a8a;background:#fff"></div>
<div class="a" style="left:427px;top:166px;width:13px;height:14px;border:1px solid #8e8e8e;background:#fff"></div>
<div class="a" style="left:406px;top:591px;width:811px;height:16px;background:#f5f1f5"></div>
<svg style="left:1206px;top:595px" width="8" height="9"><path d="M1.5 1L5.5 4.5L1.5 8" fill="none" stroke="#555" stroke-width="1.8"/></svg>
<div class="a" style="left:406px;top:607px;width:804px;height:1px;background:#d6d6d6"></div>
<div class="a" style="left:406px;top:612px;width:804px;height:1px;background:#a2a2a2"></div>
<div class="a" style="left:406px;top:640px;width:97px;height:31px;border:1px solid #1b4884;border-radius:4px;background:linear-gradient(#ffffff 0%,#fbf9f9 45%,#f1ebeb 100%);"></div>
<div class="t" style="left:420px;top:653px;font-size:10.9px;letter-spacing:0px;color:#111">Inserir faturas</div>
<div class="a" style="left:509px;top:640px;width:108px;height:31px;border:1px solid #1b4884;border-radius:4px;background:linear-gradient(#ffffff 0%,#fbf9f9 45%,#f1ebeb 100%);box-shadow:inset 0 0 0 1px #8fb4f0,inset 0 -1px 0 1px #6a9ae8"></div>
<div class="t" style="left:512px;top:653px;font-size:10.5px;color:#111">Configurações NFS-e</div>
<div class="a" style="left:408px;top:676px;width:814px;height:1px;background:#a8a8a8"></div>
<div class="a" style="left:637px;top:683px;width:68px;height:24px;border:1px solid #1b4884;border-radius:4px;background:linear-gradient(#ffffff 0%,#fbf9f9 45%,#f1ebeb 100%);"></div>
<svg style="left:645px;top:688px" width="16" height="16" viewBox="0 0 16 16"><rect x="1" y="4" width="12" height="11" fill="#f4f4f8" stroke="#8a8a8a"/><path d="M3 7H9M3 9H9M3 11H8" stroke="#b8b8d0" stroke-width="0.8"/><path d="M5.5 14 L14 2.5" stroke="#e8a800" stroke-width="2.2"/><path d="M13.3 3.4 L14.8 1.5" stroke="#c03a10" stroke-width="2"/></svg>
<div class="t" style="left:663px;top:690px;font-size:10.5px;letter-spacing:-0.16px;color:#111">Assinar</div>
<div class="a" style="left:663px;top:700px;width:7px;height:1px;background:#111"></div>
<div class="a" style="left:708px;top:683px;width:76px;height:24px;border:1px solid #1b4884;border-radius:4px;background:linear-gradient(#ffffff 0%,#fbf9f9 45%,#f1ebeb 100%);"></div>
<svg style="left:713px;top:688px" width="16" height="13" viewBox="0 0 16 13"><defs><linearGradient id="mon" x1="0" y1="0" x2="0" y2="1"><stop offset="0" stop-color="#8fd0ff"/><stop offset="1" stop-color="#20a8f0"/></linearGradient></defs><rect x="1" y="3" width="6" height="6" fill="url(#mon)" stroke="#8aa0d0" stroke-width="0.6"/><rect x="9" y="1" width="6" height="6.5" fill="url(#mon)" stroke="#8aa0d0" stroke-width="0.6"/><path d="M0.5 11.5 Q3 9 6 11.5Z M8.5 11 Q12 8.5 15 11Z" fill="#8a80d0"/><path d="M4 4 H8.5 V1.5 L12.5 5 L8.5 8.8 V6.5 H4Z" fill="#30b828"/></svg>
<div class="t" style="left:732px;top:690px;font-size:10.5px;letter-spacing:0px;color:#111">Transmitir</div>
<div class="a" style="left:732px;top:700px;width:6px;height:1px;background:#111"></div>
<div class="a" style="left:788px;top:683px;width:76px;height:24px;border:1px solid #1b4884;border-radius:4px;background:linear-gradient(#ffffff 0%,#fbf9f9 45%,#f1ebeb 100%);"></div>
<svg style="left:793px;top:687px" width="16" height="16" viewBox="0 0 16 16"><path d="M3.5 1.5 H11 L14 4.5 V14.5 H3.5Z" fill="#fff" stroke="#8aaee8" stroke-width="1"/><circle cx="10" cy="5.5" r="4" fill="#d4f4ff" stroke="#a8d4f4" stroke-width="0.8"/><path d="M6.8 8.5 L1.5 14" stroke="#f08c3c" stroke-width="2.2" stroke-linecap="round"/></svg>
<div class="t" style="left:811.5px;top:690px;font-size:10.5px;letter-spacing:0px;color:#111">Consultar</div>
<div class="a" style="left:811.5px;top:700px;width:7.5px;height:1px;background:#111"></div>
<div class="a" style="left:867px;top:683px;width:65px;height:24px;border:1px solid #1b4884;border-radius:4px;background:linear-gradient(#ffffff 0%,#fbf9f9 45%,#f1ebeb 100%);"></div>
<svg style="left:880px;top:692px" width="13" height="8" viewBox="0 0 13 8"><rect x="0.5" y="0.5" width="12" height="7" fill="#fbf79a" stroke="#8c8a52" stroke-width="1"/><path d="M1 1 L4 4.3 H9 L12 1 M1 7 L4 4.3 M12 7 L9 4.3" fill="none" stroke="#8c8a52" stroke-width="0.9"/><rect x="3.5" y="5" width="6" height="1.8" fill="#fff"/></svg>
<div class="t" style="left:896px;top:690px;font-size:10.5px;letter-spacing:-0.2px;color:#111">CC-e</div>
<div class="a" style="left:935px;top:683px;width:72px;height:24px;border:1px solid #1b4884;border-radius:4px;background:linear-gradient(#ffffff 0%,#fbf9f9 45%,#f1ebeb 100%);"></div>
<svg style="left:941px;top:686px" width="17" height="18" viewBox="0 0 17 18"><rect x="4" y="1" width="9" height="6" fill="#fff" stroke="#777"/><rect x="0.5" y="6.5" width="16" height="7" rx="1" fill="#9a9a9a" stroke="#555"/><rect x="3.5" y="11.5" width="10" height="6" fill="#fff" stroke="#666"/></svg>
<div class="t" style="left:960px;top:690px;font-size:10.5px;letter-spacing:0px;color:#111">Imprimir</div>
<div class="a" style="left:975px;top:700px;width:6px;height:1px;background:#111"></div>
<div class="a" style="left:1010px;top:683px;width:73px;height:24px;border:1px solid #1b4884;border-radius:4px;background:linear-gradient(#ffffff 0%,#fbf9f9 45%,#f1ebeb 100%);"></div>
<svg style="left:1015px;top:687px" width="16" height="16" viewBox="0 0 16 16"><path d="M3.5 1.5 H11 L14 4.5 V14.5 H3.5Z" fill="#fff" stroke="#8aaee8" stroke-width="1"/><circle cx="10" cy="5.5" r="4" fill="#d4f4ff" stroke="#a8d4f4" stroke-width="0.8"/><path d="M6.8 8.5 L1.5 14" stroke="#f08c3c" stroke-width="2.2" stroke-linecap="round"/></svg>
<div class="t" style="left:1033.5px;top:690px;font-size:10.5px;letter-spacing:-0.22px;color:#111">Visualizar</div>
<div class="a" style="left:1033.5px;top:700px;width:6.5px;height:1px;background:#111"></div>
<div class="a" style="left:1086px;top:683px;width:67px;height:24px;border:1px solid #1b4884;border-radius:4px;background:linear-gradient(#ffffff 0%,#fbf9f9 45%,#f1ebeb 100%);"></div>
<svg style="left:1100px;top:692px" width="13" height="8" viewBox="0 0 13 8"><rect x="0.5" y="0.5" width="12" height="7" fill="#fbf79a" stroke="#8c8a52" stroke-width="1"/><path d="M1 1 L4 4.3 H9 L12 1 M1 7 L4 4.3 M12 7 L9 4.3" fill="none" stroke="#8c8a52" stroke-width="0.9"/><rect x="3.5" y="5" width="6" height="1.8" fill="#fff"/></svg>
<div class="t" style="left:1116.5px;top:690px;font-size:10.5px;letter-spacing:-0.43px;color:#111">Email</div>
<div class="a" style="left:1123px;top:700px;width:8px;height:1px;background:#111"></div>
<div class="a" style="left:1156px;top:683px;width:66px;height:24px;border:1px solid #1b4884;border-radius:4px;background:linear-gradient(#ffffff 0%,#fbf9f9 45%,#f1ebeb 100%);"></div>
<svg style="left:1165px;top:689px" width="12" height="12" viewBox="0 0 12 12"><path d="M1 1L11 11M11 1L1 11" stroke="#d03030" stroke-width="2.2"/></svg>
<div class="t" style="left:1180.5px;top:690px;font-size:10.5px;letter-spacing:0px;color:#111">Fechar</div>
<div class="a" style="left:1180.5px;top:700px;width:6.5px;height:1px;background:#111"></div>
<!-- RIGHTPANEL_PLACEHOLDER -->
<!-- ===== DIALOG ===== -->
<div class="a" style="left:389px;top:177px;width:671px;height:473px;border:5px solid #7e0016;background:#f5f2f5"></div>
<div class="a" style="left:394px;top:182px;width:660px;height:25px;background:#fff"></div>
<div class="a" style="left:1054px;top:182px;width:1px;height:463px;background:#2a8ce8"></div>
<svg style="left:396px;top:187px" width="15" height="13" viewBox="0 0 15 13"><rect x="0.5" y="0.5" width="14" height="12" fill="#f6f6f8" stroke="#a6a6ae"/><rect x="1" y="1" width="13" height="2" fill="#fbfbff"/><rect x="2" y="3" width="5" height="8" fill="url(#gbg)"/><rect x="11.5" y="3" width="2" height="4" fill="url(#gbg)"/><rect x="8" y="3" width="2.5" height="8" fill="#e8e4e8"/><defs><linearGradient id="gbg" x1="0" y1="0" x2="0" y2="1"><stop offset="0" stop-color="#4a7cc8"/><stop offset="1" stop-color="#44a858"/></linearGradient></defs></svg>
<div class="t" style="left:417px;top:189px;font-size:11.4px;color:#111">Recibo Provisório de Serviços [RPS]</div>
<svg style="left:1033px;top:188px" width="12" height="12"><path d="M0.8 0.8L11.2 11.2M11.2 0.8L0.8 11.2" stroke="#111" stroke-width="1.2"/></svg>
<div class="a" style="left:403px;top:219px;width:80px;height:18px;background:#f2eff2;border-left:1px solid #fff;border-top:1px solid #fff;border-right:2px solid #8a8a8a"></div>
<div class="a" style="left:483px;top:219px;width:49px;height:18px;background:#f2eff2;border-left:1px solid #fff;border-top:1px solid #fff;border-right:1px solid #c8c8c8"></div>
<div class="t" style="left:407.5px;top:222.5px;font-size:10.65px;color:#111">Configurações</div>
<div class="t" style="left:488.5px;top:222.5px;font-size:10.4px;color:#111">Cidades</div>
<div class="a" style="left:400px;top:236px;width:648px;height:371px;background:#f5f2f5;border-top:1px solid #e2dfe2;border-left:1px solid #fff;border-right:2px solid #727272;border-bottom:2px solid #6e6e6e"></div>
<div class="a" style="left:1045px;top:237px;width:1px;height:368px;background:#bdbdbd"></div>
<div class="a" style="left:401px;top:604px;width:645px;height:1px;background:#bdbdbd"></div>
<div class="a" style="left:532px;top:217px;width:53px;height:21px;background:#f5f2f5;border-left:1px solid #fff;border-top:1px solid #fff;border-right:2px solid #727272"></div>
<div class="t" style="left:538.4px;top:221.5px;font-size:10.4px;color:#111">Códigos</div>
<div class="a" style="left:404px;top:262px;width:193px;height:341px;background:#fff;border:1px solid #a2a2a2"></div>
<div class="a" style="left:600px;top:279px;width:444px;height:31px;background:#c8c6cb"></div>
<div class="a" style="left:607px;top:284px;width:321px;height:19px;background:#fff;border-top:1px solid #6a6a6a;border-left:1px solid #6a6a6a;border-bottom:1px solid #e8e8e8;border-right:1px solid #e8e8e8"></div>
<div class="a" style="left:932px;top:283px;width:103px;height:22px;border:1px solid #1b4884;border-radius:4px;background:linear-gradient(#ffffff 0%,#fbf9f9 45%,#f1ebeb 100%)"></div>
<div class="t" style="left:959px;top:288px;font-size:10.5px;letter-spacing:-0.15px;color:#111">Pesquisar</div>
<div class="a" style="left:959px;top:299px;width:7px;height:1px;background:#111"></div>
<div class="a" style="left:600px;top:310px;width:444px;height:294px;background:#fff"></div>
<div class="a" style="left:600px;top:310px;width:443px;height:18px;background:#f5f1f5;border-bottom:1px solid #ece7eb"></div>
<div class="a" style="left:600px;top:328px;width:12px;height:18px;background:#f5f1f5;border-bottom:1px solid #fff"></div>
<div class="a" style="left:612px;top:328px;width:431px;height:18px;background:#fdf9fd;border-bottom:1px solid #ede8ec"></div>
<div class="t" style="left:617.5px;top:332px;font-size:10.5px;color:#111">14</div>
<div class="t" style="left:667.5px;top:332px;font-size:10.5px;letter-spacing:0px;color:#111">MIDIA INDOOR</div>
<div class="a" style="left:1021px;top:330px;width:13px;height:13px;border:1px solid #7a7a7a;background:#fff"></div>
<div class="a" style="left:600px;top:346px;width:12px;height:18px;background:#f5f1f5;border-bottom:1px solid #fff"></div>
<div class="a" style="left:612px;top:346px;width:431px;height:18px;background:#fdf9fd;border-bottom:1px solid #ede8ec"></div>
<div class="t" style="left:617.5px;top:350px;font-size:10.5px;color:#111">7</div>
<div class="t" style="left:667.5px;top:350px;font-size:10.5px;letter-spacing:0px;color:#111">MÍDIA DIGITAL</div>
<div class="a" style="left:1021px;top:348px;width:13px;height:13px;border:1px solid #7a7a7a;background:#fff"></div>
<div class="a" style="left:600px;top:364px;width:12px;height:18px;background:#f5f1f5;border-bottom:1px solid #fff"></div>
<div class="a" style="left:612px;top:364px;width:431px;height:18px;background:#fdf9fd;border-bottom:1px solid #ede8ec"></div>
<div class="t" style="left:617.5px;top:368px;font-size:10.5px;color:#111">1</div>
<div class="t" style="left:667.5px;top:368px;font-size:10.5px;letter-spacing:0px;color:#111">MIDIA EXTERIOR</div>
<div class="a" style="left:1021px;top:366px;width:13px;height:13px;border:1px solid #7a7a7a;background:#fff"></div>
<div class="a" style="left:600px;top:382px;width:12px;height:18px;background:#f5f1f5;border-bottom:1px solid #fff"></div>
<div class="a" style="left:612px;top:382px;width:431px;height:18px;background:#fdf9fd;border-bottom:1px solid #ede8ec"></div>
<div class="t" style="left:617.5px;top:386px;font-size:10.5px;color:#111">15</div>
<div class="t" style="left:667.5px;top:386px;font-size:10.5px;letter-spacing:0px;color:#111">midia indoor 2</div>
<div class="a" style="left:1021px;top:384px;width:13px;height:13px;border:1px solid #7a7a7a;background:#fff"></div>
<div class="a" style="left:600px;top:400px;width:12px;height:18px;background:#f5f1f5;border-bottom:1px solid #fff"></div>
<div class="a" style="left:612px;top:400px;width:431px;height:18px;background:#fdf9fd;border-bottom:1px solid #ede8ec"></div>
<div class="t" style="left:617.5px;top:404px;font-size:10.5px;color:#111">10</div>
<div class="t" style="left:667.5px;top:404px;font-size:10.5px;letter-spacing:-0.43px;color:#111">DEPT FRONT LIGHT</div>
<div class="a" style="left:1021px;top:402px;width:13px;height:13px;border:1px solid #7a7a7a;background:#fff"></div>
<div class="a" style="left:662px;top:310px;width:1px;height:107px;background:#ebe6ea"></div>
<div class="a" style="left:859px;top:310px;width:1px;height:107px;background:#ebe6ea"></div>
<div class="a" style="left:910px;top:310px;width:1px;height:107px;background:#ebe6ea"></div>
<div class="a" style="left:961px;top:310px;width:1px;height:107px;background:#ebe6ea"></div>
<div class="a" style="left:1012px;top:310px;width:1px;height:107px;background:#ebe6ea"></div>
<div class="a" style="left:1042px;top:310px;width:1px;height:107px;background:#ebe6ea"></div>
<div class="a" style="left:612px;top:328px;width:50px;height:17px;border:1px solid #6e6e6e;background:#fff"></div>
<div class="t" style="left:617.5px;top:332px;font-size:10.5px;color:#111">14</div>
<svg style="left:606px;top:334px" width="4" height="6"><path d="M0 0L3.5 3L0 6Z" fill="#111"/></svg>
<div class="t" style="left:616.5px;top:314px;font-size:10.5px;color:#111">ID</div>
<div class="t" style="left:667.5px;top:314px;font-size:10.8px;color:#111">Departamentos</div>
<div class="t" style="left:864.7px;top:314px;font-size:10.4px;color:#111">Cód.Serv</div>
<div class="t" style="left:915.6px;top:314px;font-size:10.4px;color:#111">N. B. S.</div>
<div class="t" style="left:966.4px;top:314px;font-size:10.4px;color:#111">Cód.Trib.</div>
<div class="t" style="left:1018px;top:314px;font-size:10.4px;color:#111">Item</div>
<div class="a" style="left:822px;top:612px;width:102px;height:24px;border:1px solid #1b4884;border-radius:4px;background:linear-gradient(#ffffff 0%,#fbf9f9 45%,#f1ebeb 100%)"></div>
<svg style="left:847px;top:617px" width="17" height="15" viewBox="0 0 17 15"><path d="M1 8 L6 13.5 L16 1.5" fill="none" stroke="#3e9a58" stroke-width="3" stroke-linejoin="round"/></svg>
<div class="t" style="left:868px;top:619px;font-size:10.5px;letter-spacing:-0.2px;color:#111">Aplicar</div>
<div class="a" style="left:868px;top:629px;width:7px;height:1px;background:#111"></div>
<div class="a" style="left:937px;top:612px;width:102px;height:24px;border:1px solid #1b4884;border-radius:4px;background:linear-gradient(#ffffff 0%,#fbf9f9 45%,#f1ebeb 100%)"></div>
<svg style="left:959px;top:618px" width="12" height="12" viewBox="0 0 12 12"><path d="M1 1L11 11M11 1L1 11" stroke="#d83a3a" stroke-width="2"/></svg>
<div class="t" style="left:975px;top:619px;font-size:10.5px;letter-spacing:-0.02px;color:#111">Cancelar</div>
<div class="a" style="left:975px;top:629px;width:7px;height:1px;background:#111"></div>
<div class="a" style="left:402px;top:239px;width:205px;height:139px;border:5px solid #e8141e"></div>
<div class="a" style="left:407px;top:244px;width:195px;height:20px;background:#f5f2f5"></div>
<div class="a" style="left:408px;top:244px;width:192px;height:19px;background:#fff;border:1px solid #3b7fd6"></div>
<div class="a" style="left:584px;top:245px;width:1px;height:17px;background:#e6e6e6"></div>
<svg style="left:589px;top:253px" width="7" height="4"><path d="M0 0H7L3.5 4Z" fill="#000"/></svg>
<div class="t" style="left:413.5px;top:249px;font-size:10.5px;color:#111">(Geral)</div>
<div class="a" style="left:407px;top:266px;width:195px;height:106px;background:#fff;border-left:1px solid #6a6a6a;border-bottom:1px solid #6a6a6a"></div>
<div class="a" style="left:408px;top:267px;width:193px;height:12px;background:#0a72d6;outline:1px dotted #e09048;outline-offset:-1px"></div>
<div class="a" style="left:491px;top:268px;width:1px;height:10px;background:#fff"></div>
<div class="a" style="left:492px;top:279px;width:1px;height:40px;background:#f0f0f0"></div>
<div class="t" style="left:409px;top:269px;font-size:10.5px;color:#fff">(Geral)</div>
<div class="t" style="left:409.5px;top:282px;font-size:10.5px;color:#111">JS</div>
<div class="t" style="left:593px;top:282px;font-size:10.5px;color:#111">3</div>
<div class="t" style="left:409.5px;top:295px;font-size:10.5px;color:#111">LM</div>
<div class="t" style="left:593px;top:295px;font-size:10.5px;color:#111">2</div>
<div class="t" style="left:409.5px;top:308px;font-size:10.5px;color:#111">LW</div>
<div class="t" style="left:593px;top:308px;font-size:10.5px;color:#111">1</div>
<!-- DIALOG_PLACEHOLDER -->

</div>
</body></html>
